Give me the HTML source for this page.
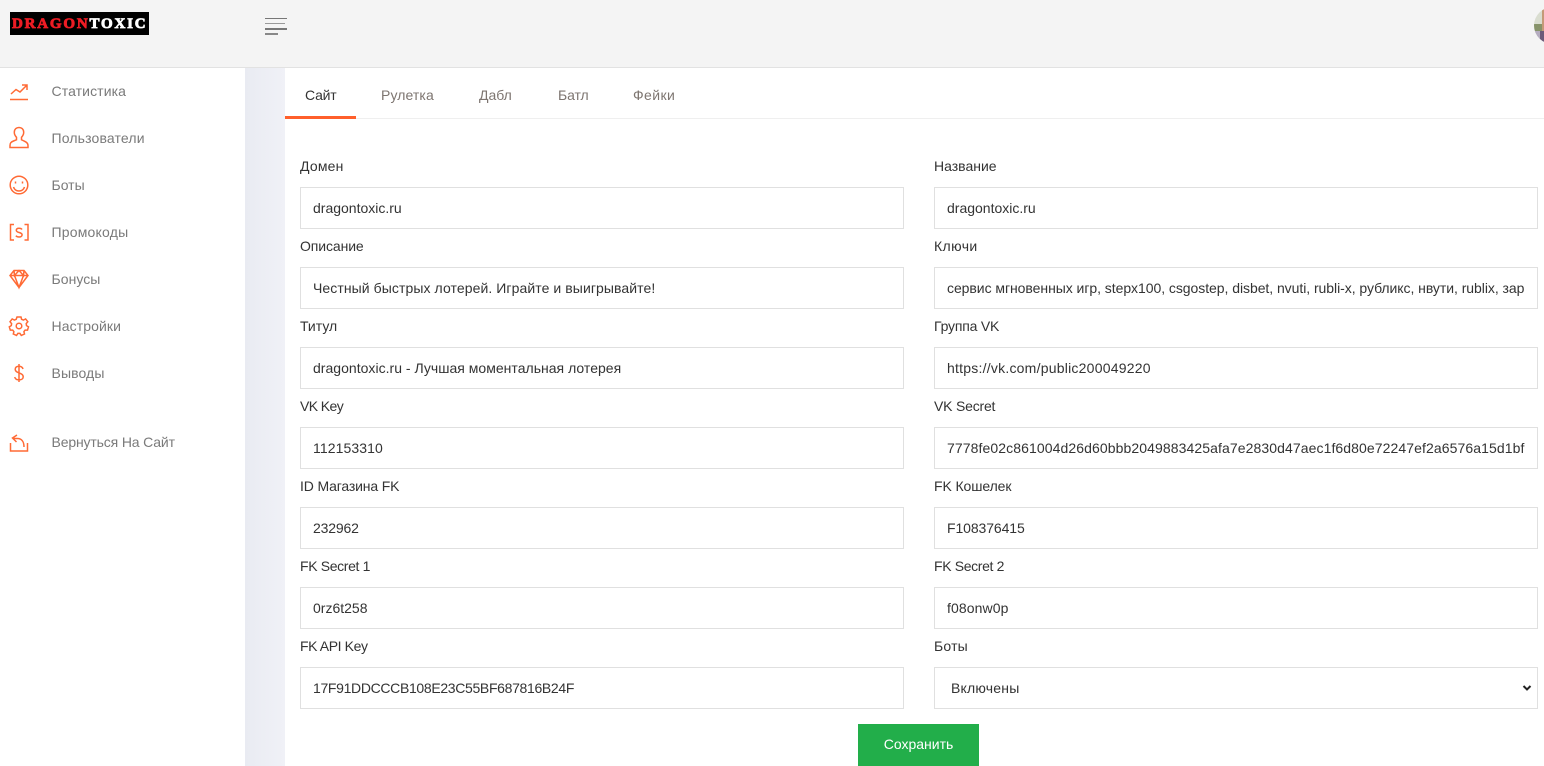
<!DOCTYPE html>
<html><head><meta charset="utf-8"><style>
html,body{margin:0;padding:0;width:1544px;height:766px;overflow:hidden;background:#fff;font-family:"Liberation Sans",sans-serif;font-size:14px;color:#333}
div,span,svg,select{position:absolute;box-sizing:border-box}
.t{white-space:nowrap;line-height:20px}
.n{left:51.5px;color:#7a7a7a;font-size:14px}
.tab{top:85px;color:#7d7570;font-size:14px}
.l{color:#333;font-size:14px}
.b{width:604px;height:42px;border:1px solid #e0e0e0;background:#fff;padding:0 12.5px 0 12px;line-height:40px;color:#333;font-size:14px;white-space:nowrap;overflow:hidden}
.b i{font-style:normal;display:block;overflow:hidden}
svg{left:0;top:0;fill:none;stroke:#ff6a35;stroke-width:1.5}
</style></head><body>
<div style="left:0;top:0;width:1544px;height:68px;background:#f4f4f4;border-bottom:1px solid #e2e2e2"></div>
<div style="left:10px;top:12px;width:139px;height:23px;background:#000"></div>
<div class="t" style="left:12px;top:13.500px;font:bold 15px/21px 'Liberation Serif',serif;letter-spacing:1.8px;color:#ed1c24;-webkit-text-stroke:.8px #ed1c24">DRAGON<span style="position:static;color:#fff;-webkit-text-stroke:.8px #fff">TOXIC</span></div>
<div style="left:265px;top:18px;width:22px;height:1px;background:#777"></div>
<div style="left:265px;top:23px;width:20px;height:1px;background:#999"></div>
<div style="left:265px;top:28px;width:22px;height:1.500px;background:#777"></div>
<div style="left:265px;top:33px;width:13px;height:1.500px;background:#888"></div>
<div style="left:1534px;top:7px;width:38px;height:37px;border-radius:50%;overflow:hidden;background:#d9ddd0">
<div style="left:0;top:17px;width:8px;height:7px;background:#87936a"></div>
<div style="left:0;top:24px;width:10px;height:13px;background:#b5adc0"></div>
<div style="left:8px;top:0;width:10px;height:24px;background:#c49a78"></div>
<div style="left:6px;top:24px;width:10px;height:13px;background:#6b5a78"></div>
</div>
<div style="left:245px;top:68px;width:40px;height:698px;background:linear-gradient(90deg,#e9ebf2,#f0f1f7)"></div>

<svg width="245" height="766">
<path d="M10 99.500H28M11 94l5-4.500 4 2.500 7-7M22 85h5v5"/>
<path d="M10 147.500h18v-2c0-2.500-1.500-3.500-4-4.500l-2.500-1.200v-2.500c1.500-1.500 2.200-3 2.200-5 0-3-2-4.800-4.700-4.800s-4.700 1.800-4.700 4.800c0 2 .7 3.500 2.200 5v2.500L13.500 141c-2.500 1-3.500 2-3.500 4.500z"/>
<circle cx="19" cy="185" r="8.800"/><path d="M13.500 187c1 3 3 4 5.500 4s4.500-1 5.500-4M15.500 181.500v2M22.500 181.500v2"/>
<path d="M14 224.500h-3.500v15.500H14M24.500 224.500H28v15.500h-3.500M22 229.500c-.5-.8-1.500-1.200-3-1.200-1.700 0-2.700.8-2.700 2.100 0 2.800 5.800 1.400 5.800 4.400 0 1.300-1.200 2.200-3 2.200-1.500 0-2.600-.5-3.200-1.300"/>
<path d="M14 270.500h10l4 5-9 12-9-12zM10 275.500h18M14.500 275.500l4.500 12 4.500-12M14 270.500l.5 5 4.500-5 4.500 5 .5-5"/>
<circle cx="19" cy="326" r="2.800"/><path d="M17 317h4l.6 2.300 1.800.8 2.200-1.200 2.200 2.800-1.600 1.900.3 2 2 1.200-1 3.300-2.400 0-1.200 1.600.6 2.300-3.200 1.400-1.400-2h-2l-1.400 2-3.200-1.400.6-2.300-1.200-1.600-2.400 0-1-3.300 2-1.200.3-2-1.600-1.900 2.200-2.800 2.200 1.200 1.800-.8z"/>
<path d="M19 364v18M23 369c-.5-1.800-2-2.800-4-2.800-2.300 0-3.800 1.200-3.800 3 0 4.500 8 3 8 7.700 0 1.800-1.600 3-4.200 3-2.200 0-3.800-1-4.300-2.800"/>
<path d="M10.500 443v8h17V443M17 435l-4.500 3 4 4M12.500 438.500h5c4 0 6.500 3 6.500 8.500"/>
</svg>
<div class="t n" style="top:81px;letter-spacing:.1px">Статистика</div>
<div class="t n" style="top:128px;letter-spacing:.15px">Пользователи</div>
<div class="t n" style="top:175px">Боты</div>
<div class="t n" style="top:222px;letter-spacing:.2px">Промокоды</div>
<div class="t n" style="top:269px;letter-spacing:.05px">Бонусы</div>
<div class="t n" style="top:316px;letter-spacing:.1px">Настройки</div>
<div class="t n" style="top:363px;letter-spacing:.1px">Выводы</div>
<div class="t n" style="top:432px;letter-spacing:-.15px">Вернуться На Сайт</div>

<div style="left:285px;top:118px;width:1259px;height:1px;background:#efefef"></div>
<div style="left:285px;top:116px;width:71px;height:3px;background:#ff5f2b"></div>
<div class="t tab" style="left:305px;color:#333;letter-spacing:-.2px">Сайт</div>
<div class="t tab" style="left:381px;letter-spacing:.1px">Рулетка</div>
<div class="t tab" style="left:479px">Дабл</div>
<div class="t tab" style="left:558px;letter-spacing:-.1px">Батл</div>
<div class="t tab" style="left:633px;letter-spacing:.4px">Фейки</div>

<div class="t l" style="left:300px;top:156px;letter-spacing:.2px">Домен</div>
<div class="b" style="left:300px;top:187px">dragontoxic.ru</div>
<div class="t l" style="left:934px;top:156px">Название</div>
<div class="b" style="left:934px;top:187px">dragontoxic.ru</div>
<div class="t l" style="left:300px;top:236px;letter-spacing:-.1px">Описание</div>
<div class="b" style="left:300px;top:267px;letter-spacing:.08px">Честный быстрых лотерей. Играйте и выигрывайте!</div>
<div class="t l" style="left:934px;top:236px;letter-spacing:.4px">Ключи</div>
<div class="b" style="left:934px;top:267px;letter-spacing:-.05px"><i>сервис мгновенных игр, stepx100, csgostep, disbet, nvuti, rubli-x, рубликс, нвути, rublix, зарабо</i></div>
<div class="t l" style="left:300px;top:316px">Титул</div>
<div class="b" style="left:300px;top:347px;letter-spacing:.02px">dragontoxic.ru - Лучшая моментальная лотерея</div>
<div class="t l" style="left:934px;top:316px;letter-spacing:-.2px">Группа VK</div>
<div class="b" style="left:934px;top:347px;letter-spacing:.23px">https://vk.com/public200049220</div>
<div class="t l" style="left:300px;top:396px;letter-spacing:-.6px">VK Key</div>
<div class="b" style="left:300px;top:427px;letter-spacing:.1px">112153310</div>
<div class="t l" style="left:934px;top:396px;letter-spacing:-.2px">VK Secret</div>
<div class="b" style="left:934px;top:427px;letter-spacing:.09px">7778fe02c861004d26d60bbb2049883425afa7e2830d47aec1f6d80e72247ef2a6576a15d1bf</div>
<div class="t l" style="left:300px;top:476px;letter-spacing:-.15px">ID Магазина FK</div>
<div class="b" style="left:300px;top:507px;letter-spacing:-.15px">232962</div>
<div class="t l" style="left:934px;top:476px;letter-spacing:-.1px">FK Кошелек</div>
<div class="b" style="left:934px;top:507px;letter-spacing:-.1px">F108376415</div>
<div class="t l" style="left:300px;top:556px;letter-spacing:-.35px">FK Secret 1</div>
<div class="b" style="left:300px;top:587px">0rz6t258</div>
<div class="t l" style="left:934px;top:556px;letter-spacing:-.35px">FK Secret 2</div>
<div class="b" style="left:934px;top:587px;letter-spacing:.1px">f08onw0p</div>
<div class="t l" style="left:300px;top:636px;letter-spacing:-.4px">FK API Key</div>
<div class="b" style="left:300px;top:667px;letter-spacing:-.33px">17F91DDCCCB108E23C55BF687816B24F</div>
<div class="t l" style="left:934px;top:636px;letter-spacing:.2px">Боты</div>
<div class="b" style="left:934px;top:667px;padding-left:16px;letter-spacing:.2px">Включены</div>
<svg width="1544" height="766" style="stroke:#222;stroke-width:2"><path d="M1523.500 686l3.500 3.500 3.500-3.500"/></svg>
<div style="left:858px;top:724px;width:121px;height:42px;background:#22ae4a;color:#fff;text-align:center;line-height:41px;font-size:14px">Сохранить</div>
</body></html>
